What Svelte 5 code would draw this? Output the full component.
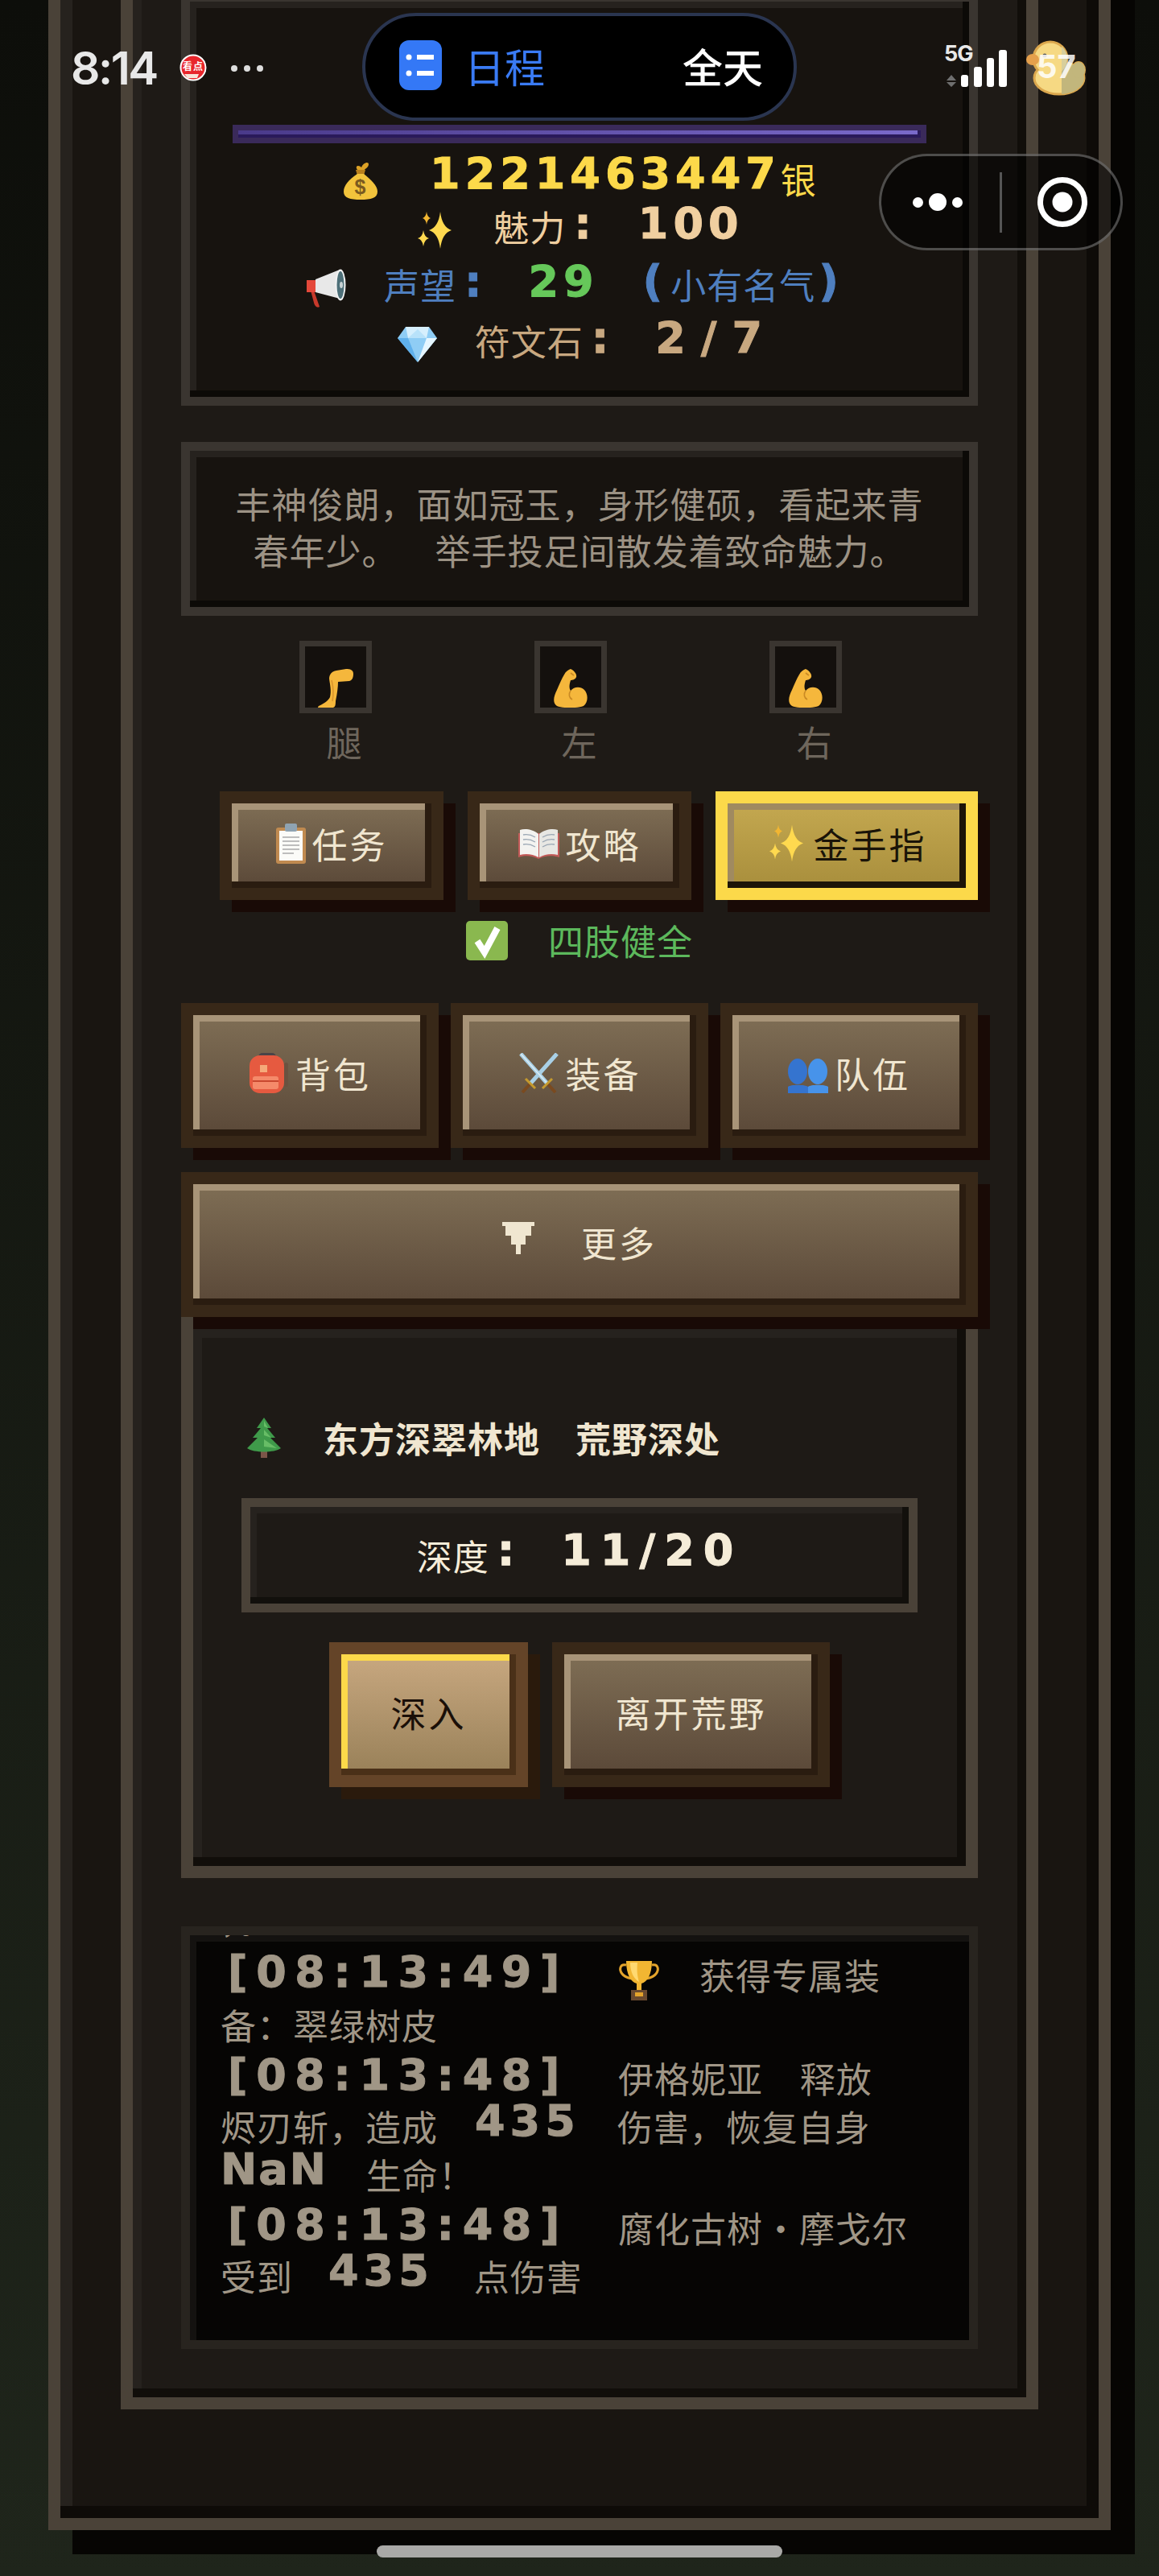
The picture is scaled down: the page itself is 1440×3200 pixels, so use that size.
<script>
  // 4-point sparkle shape
  function star(cx, cy, rx, ry) {
    const kx = rx * 0.16;
    const ky = ry * 0.16;
    return `M${cx} ${cy - ry}Q${cx + kx} ${cy - ky} ${cx + rx} ${cy}Q${cx + kx} ${cy + ky} ${cx} ${cy + ry}Q${cx - kx} ${cy + ky} ${cx - rx} ${cy}Q${cx - kx} ${cy - ky} ${cx} ${cy - ry}Z`;
  }

  const limbs = [
    { name: "腿", icon: "leg" },
    { name: "左", icon: "arm" },
    { name: "右", icon: "arm" },
  ];
</script>

{#snippet sparkles(w, h)}
  <svg class="ic" width={w} height={h} viewBox="0 0 50 46">
    <path d={star(31, 23, 14, 23)} fill="#ffd94f" />
    <path d={star(14, 8, 5, 8)} fill="#f2b632" />
    <path d={star(10, 33, 7, 10)} fill="#ffd94f" />
  </svg>
{/snippet}

{#snippet leg()}
  <svg class="ic" width="46" height="48" viewBox="0 0 46 48">
    <path d="M45 6C45 1 41 0 36 0L24 2C18 3 15 7 15 12C16 20 18 27 16 35C14 40 6 44 2 46C0 48 1 48 4 48L19 48C22 48 23 46 23 40C25 30 26 22 26 16L40 15C44 14 45 10 45 6Z" fill="#f5b73c" />
    <path d="M18 14C20 22 21 30 19 40" stroke="#d8922a" stroke-width="1.5" fill="none" />
  </svg>
{/snippet}

{#snippet arm()}
  <svg class="ic" width="44" height="48" viewBox="0 0 44 48">
    <path d="M22 0C26 2 30 6 29 10C28 13 24 14 22 14C20 20 20 24 22 27C26 22 34 21 39 26C44 31 44 42 38 46C30 49 12 49 5 46C-1 42 1 34 5 26C8 19 11 12 14 7C16 3 19 1 22 0Z" fill="#f5b73c" />
    <path d="M22 27C19 31 20 36 24 38M22 5L26 8" stroke="#c98a24" stroke-width="1.6" fill="none" />
  </svg>
{/snippet}

<div class="page">
  <div class="frame">
    <div class="frame-inner">
      <section class="panel stats">
        <div class="bar-track"><div class="bar-fill"></div></div>

        <div class="row gold">
          <svg class="ic bag" width="46" height="50" viewBox="0 0 46 50">
            <path d="M19 12C15 6 22 6 24 9C26 3 33 1 33 5C33 9 29 10 27 13Z" fill="#dca126" />
            <path d="M17 12H29L27 19H19Z" fill="#b9801c" />
            <path d="M19 17C8 24 2 32 2 39C2 47 10 49 23 49C36 49 44 47 44 39C44 32 36 24 27 17Z" fill="#f2c33c" />
            <text x="23" y="42" font-size="25" font-weight="700" text-anchor="middle" fill="#7a5a20" font-family="Liberation Sans">$</text>
          </svg>
          <span class="px money">1221463447</span><span class="cn">银</span>
        </div>

        <div class="row peach">
          {@render sparkles(50, 46)}
          <span class="cn lbl">魅力</span><span class="px colon">:</span><span class="px">100</span>
        </div>

        <div class="row blue r3">
          <svg class="ic" width="50" height="48" viewBox="0 0 50 48">
            <path d="M10 27L17 47C14 49 11 46 10 42L6 27Z" fill="#c7392b" />
            <path d="M1 14H14V29H1Z" fill="#e4483a" />
            <path d="M12 13L42 1L46 38L12 29Z" fill="#e8e8e8" />
            <ellipse cx="43" cy="20" rx="6.5" ry="19.5" fill="#f2f2f2" />
            <ellipse cx="43" cy="20" rx="4.5" ry="17" fill="#4d6f78" />
            <ellipse cx="44" cy="20" rx="2" ry="4" fill="#c8d2d4" />
          </svg>
          <span class="cn lbl">声望</span><span class="px colon">:</span><span class="px green">29</span>
          <span class="px paren">(</span><span class="cn lbl rep">小有名气</span><span class="px paren">)</span>
        </div>

        <div class="row tan r4">
          <svg class="ic" width="49" height="44" viewBox="0 0 49 44">
            <path d="M10 0H39L49 14L25 44L0 14Z" fill="#8fcdf5" />
            <path d="M10 0H39L36 14H13Z" fill="#d6effd" />
            <path d="M0 14H13L25 44Z" fill="#5fb0ec" />
            <path d="M49 14H36L25 44Z" fill="#e6f6ff" />
            <path d="M13 14L25 3L36 14Z" fill="#b8e2fa" />
          </svg>
          <span class="cn lbl">符文石</span><span class="px colon">:</span><span class="px wide">2/7</span>
        </div>
      </section>

      <section class="panel desc">
        丰神俊朗，面如冠玉，身形健硕，看起来青春年少。<span class="pause"></span>举手投足间散发着致命魅力。
      </section>

      <div class="limbs">
        {#each limbs as limb}
          <div class="limb">
            <div class="slot">
              {#if limb.icon === "leg"}
                {@render leg()}
              {:else}
                {@render arm()}
              {/if}
            </div>
            <span class="limb-name">{limb.name}</span>
          </div>
        {/each}
      </div>

      <div class="actions">
        <button class="btn task">
          <svg class="ic" width="37" height="50" viewBox="0 0 37 50">
            <rect y="5" width="37" height="45" rx="3" fill="#c08a50" />
            <rect x="4" y="9" width="29" height="37" fill="#fbfbf8" />
            <rect x="11" y="0" width="15" height="10" rx="2" fill="#8fa3b2" />
            <path d="M8 17H29M8 22H29M8 27H29M8 32H29M8 37H22" stroke="#a9a9a9" stroke-width="1.5" />
          </svg>
          <span>任务</span>
        </button>
        <button class="btn task">
          <svg class="ic" width="51" height="38" viewBox="0 0 51 38">
            <path d="M0 6V36C8 33 18 34 25 38C32 34 42 33 51 36V6Z" fill="#c25a58" />
            <path d="M25 7C18 1 8 0 2 2V33C10 31 18 32 25 36Z" fill="#f3f3f0" />
            <path d="M26 7C33 1 43 0 49 2V33C41 31 33 32 26 36Z" fill="#e7e7e3" />
            <path d="M6 8C11 7 16 8 21 11M6 14C11 13 16 14 21 17M6 20C11 19 16 20 21 23M30 11C35 8 40 7 45 8M30 17C35 14 40 13 45 14M30 23C35 20 40 19 45 20" stroke="#9aa7b4" stroke-width="1.4" fill="none" />
          </svg>
          <span>攻略</span>
        </button>
        <button class="btn task cheat">
          {@render sparkles(50, 47)}
          <span>金手指</span>
        </button>
      </div>

      <div class="health">
        <svg class="ic" width="52" height="49" viewBox="0 0 52 49">
          <rect width="52" height="49" rx="5" fill="#8ab84f" />
          <path d="M14 25L23 39L39 9" stroke="#fff" stroke-width="8" fill="none" />
        </svg>
        <span>四肢健全</span>
      </div>

      <div class="menu">
        <button class="btn big">
          <svg class="ic" width="50" height="50" viewBox="0 0 50 50">
            <rect x="12" y="0" width="22" height="12" rx="5" fill="#4a4448" />
            <rect x="1" y="3" width="43" height="47" rx="13" fill="#e65a40" />
            <rect x="44" y="12" width="5" height="30" rx="2.5" fill="#6a5240" />
            <rect x="14" y="15" width="9" height="9" fill="#f5aa7a" />
            <rect x="5" y="29" width="32" height="16" rx="3" fill="#f58a6a" />
            <path d="M5 35H37" stroke="#c8472f" stroke-width="2" />
          </svg>
          <span>背包</span>
        </button>
        <button class="btn big">
          <svg class="ic" width="51" height="50" viewBox="0 0 51 50">
            <path d="M3 1L36 38M48 1L15 38" stroke="#a9d0e6" stroke-width="5" />
            <path d="M3 1L36 38" stroke="#dcecf4" stroke-width="1.5" />
            <path d="M36 38L46 49M15 38L5 49" stroke="#7a4a20" stroke-width="4" />
            <path d="M30 44L42 32M21 44L9 32" stroke="#c59a2e" stroke-width="3" />
          </svg>
          <span>装备</span>
        </button>
        <button class="btn big">
          <svg class="ic team" width="50" height="43" viewBox="0 0 50 43">
            <ellipse cx="12" cy="16" rx="12" ry="16" fill="#3574cf" />
            <path d="M0 43V35C3 32 21 32 25 35V43Z" fill="#3574cf" />
            <ellipse cx="37" cy="16" rx="12" ry="16" fill="#4793ea" />
            <path d="M25 43V35C28 32 46 32 50 35V43Z" fill="#4793ea" />
          </svg>
          <span>队伍</span>
        </button>
      </div>

      <button class="btn more">
        <svg class="ic funnel" width="40" height="40" viewBox="0 0 40 40">
          <path d="M0 0H40V5H36V17H29V28H23V40H17V28H11V17H4V5H0Z" fill="#f0e6d0" />
        </svg>
        <span>更多</span>
      </button>

      <section class="wild">
        <div class="region">
          <svg class="ic" width="46" height="50" viewBox="0 0 46 50">
            <rect x="19" y="41" width="8" height="9" fill="#7b5548" />
            <path d="M23 0L32 13H27L37 25H31L44 38C36 44 10 44 2 38L15 25H9L19 13H14Z" fill="#3f9a4a" />
            <path d="M23 4L28 13L23 11ZM23 15L32 25L23 22ZM23 27L39 38L23 36Z" fill="#67bd66" />
          </svg>
          <span>东方深翠林地 荒野深处</span>
        </div>

        <div class="depth">
          <span class="cn">深度</span><span class="px colon">:</span><span class="px deep">11/20</span>
        </div>

        <div class="wild-actions">
          <button class="btn go">深入</button>
          <button class="btn leave">离开荒野</button>
        </div>
      </section>

      <section class="log">
        <div class="entry">，。</div>
        <div class="entry">
          <span class="px ts">[08:13:49]</span><svg class="ic cup" width="52" height="50" viewBox="0 0 52 50">
            <path d="M10 6C2 4 1 12 5 17C8 21 13 22 17 23M42 6C50 4 51 12 47 17C44 21 39 22 35 23" stroke="#e3a32b" stroke-width="3" fill="none" />
            <path d="M10 1H42C42 18 36 27 29 29V37H23V29C16 27 10 18 10 1Z" fill="#f2b632" />
            <path d="M15 3H24C23 14 24 20 26 27C19 23 15 14 15 3Z" fill="#ffd970" />
            <rect x="16" y="37" width="20" height="13" fill="#6a4a30" />
            <rect x="21" y="40" width="10" height="5" fill="#e3a32b" />
          </svg><span class="after-cup">获得专属装</span><br />备：翠绿树皮
        </div>
        <div class="entry">
          <span class="px ts">[08:13:48]</span><span class="spaced">伊格妮亚 释放</span><br />烬刃斩，造成<span class="px dmg">435</span>伤害，恢复自身<br /><span class="px nan">NaN</span>生命！
        </div>
        <div class="entry">
          <span class="px ts">[08:13:48]</span>腐化古树·摩戈尔<br />受到<span class="px dmg2">435</span>点伤害
        </div>
      </section>
    </div>
  </div>

  <!-- phone status bar sits on top of the page -->
  <div class="statusbar">
    <span class="time">8:14</span>
    <svg class="ic badge" width="34" height="34" viewBox="0 0 34 34">
      <circle cx="17" cy="17" r="15.5" fill="#e8262c" stroke="#fff" stroke-width="2" />
      <text x="17" y="20" font-size="12" font-weight="700" text-anchor="middle" fill="#fff" font-family="Noto Sans CJK SC">看点</text>
      <path d="M6 25H24L22 30H10Z" fill="#f6e4d8" />
    </svg>
    <span class="more-dots"><i></i><i></i><i></i></span>

    <div class="pill">
      <svg class="ic" width="53" height="62" viewBox="0 0 53 62">
        <rect width="53" height="62" rx="12" fill="#3478f6" />
        <path d="M22 21H43M22 41H43" stroke="#fff" stroke-width="6" />
        <circle cx="12" cy="21" r="3.5" fill="#fff" />
        <circle cx="12" cy="41" r="3.5" fill="#fff" />
      </svg>
      <span class="pill-title">日程</span>
      <span class="pill-all">全天</span>
    </div>

    <div class="signal">
      <span class="fiveg">5G</span>
      <svg class="ic" width="78" height="46" viewBox="0 0 78 46">
        <path d="M3 38L9 31L15 38ZM3 40L9 46L15 40Z" fill="#6f6f6f" />
        <rect x="21" y="31" width="9" height="15" rx="3" fill="#fff" />
        <rect x="37" y="21" width="10" height="25" rx="3" fill="#fff" />
        <rect x="53" y="10" width="9" height="36" rx="3" fill="#fff" />
        <rect x="68" y="0" width="10" height="46" rx="3" fill="#fff" />
      </svg>
    </div>

    <div class="duck">
      <svg class="ic" width="75" height="70" viewBox="0 0 75 70">
        <defs>
          <clipPath id="spent"><rect x="45" y="0" width="30" height="70" /></clipPath>
        </defs>
        <g>
          <ellipse cx="42" cy="48" rx="31" ry="20" fill="#f6d983" stroke="#dca84e" stroke-width="3" />
          <ellipse cx="66" cy="38" rx="8" ry="10" fill="#f6d983" stroke="#dca84e" stroke-width="2" />
          <circle cx="31" cy="24" r="21" fill="#f6d983" stroke="#dca84e" stroke-width="3" />
          <ellipse cx="40" cy="46" rx="27" ry="16" fill="#f6d983" />
        </g>
        <g clip-path="url(#spent)">
          <ellipse cx="42" cy="48" rx="31" ry="20" fill="#c2b67c" />
          <ellipse cx="66" cy="38" rx="8" ry="10" fill="#c2b67c" />
          <circle cx="31" cy="24" r="21" fill="#d8cf9c" />
        </g>
        <ellipse cx="9" cy="25" rx="8" ry="7" fill="#e5a04c" />
        <circle cx="24" cy="20" r="2.5" fill="#5a5a5a" />
      </svg>
      <span class="duck-num">57</span>
    </div>
  </div>

  <div class="capsule">
    <span class="cap-dots"><i></i><i class="mid"></i><i></i></span>
    <span class="cap-line"></span>
    <svg class="ic" width="62" height="62" viewBox="0 0 62 62">
      <circle cx="31" cy="31" r="27.5" fill="none" stroke="#fff" stroke-width="7" />
      <circle cx="31" cy="31" r="12.5" fill="#fff" />
    </svg>
  </div>

  <div class="homebar"></div>
</div>

<style>
  :global(body) {
    margin: 0;
    background: #0d0e0a;
  }

  .page {
    position: relative;
    width: 1440px;
    height: 3200px;
    overflow: hidden;
    padding-left: 60px;
    box-sizing: border-box;
    background: linear-gradient(180deg, #0d0e0a 0%, #1f251b 100%);
    font-family: "Noto Sans CJK SC", "Liberation Sans", sans-serif;
    font-size: 44px;
    letter-spacing: 1px;
  }

  .frame {
    width: 1320px;
    box-sizing: border-box;
    margin-top: -60px;
    padding: 0 75px 135px;
    border: 15px solid #4a4238;
    background: #191511;
    box-shadow:
      30px 30px 0 #060503,
      inset -15px -15px 0 #0e0b08,
      inset 15px 15px 0 #26221e;
  }

  .frame-inner {
    box-sizing: border-box;
    padding: 21px 60px 60px;
    border: 15px solid #4a4238;
    background: #1e1a16;
    box-shadow:
      inset -11px -11px 0 #110e0a,
      inset 11px 11px 0 #26221e;
  }

  .ic {
    flex: none;
    vertical-align: middle;
  }

  /* pixel font stand-in for latin and digits */
  .px {
    font-family: "DejaVu Sans", sans-serif;
    font-weight: 700;
    font-size: 54px;
    letter-spacing: 6px;
    line-height: 0;
    vertical-align: 7px;
    -webkit-text-stroke: 1px currentColor;
  }

  .panel {
    box-sizing: border-box;
    border: 11px solid #3a3530;
    background: #17130f;
    box-shadow:
      inset -8px -8px 0 #0c0a07,
      inset 8px 8px 0 #26221e;
  }

  .stats {
    height: 513px;
    padding-top: 153px;
  }

  .bar-track {
    width: 862px;
    height: 23px;
    box-sizing: border-box;
    margin: 0 0 13px 53px;
    border: 7px solid #3a2a5a;
    background: #2a1a5a;
  }

  .bar-fill {
    height: 100%;
    background: linear-gradient(90deg, #4a3a8a, #7a6aca);
    box-shadow: inset -4px -4px 0 #2a1a5a;
  }

  .row {
    height: 62px;
    line-height: 62px;
    text-align: center;
    white-space: nowrap;
  }

  .row .ic {
    margin-bottom: 10px;
  }

  .gold {
    color: #fcd94a;
  }
  .peach {
    color: #f0cfa0;
  }
  .blue {
    color: #4f7fbf;
  }
  .tan {
    color: #c8a880;
  }
  .px.green {
    color: #66c85a;
  }

  .r3 {
    margin-top: 10px;
    padding-right: 18px;
  }
  .r4 {
    margin-top: 8px;
    padding-left: 20px;
  }

  .money {
    margin-left: 52px;
  }

  .lbl {
    margin-left: 36px;
    line-height: 0;
    vertical-align: 3px;
  }

  .colon {
    margin-left: 10px;
    margin-right: 52px;
  }

  .paren {
    margin-left: 44px;
    letter-spacing: 0;
  }

  .lbl.rep {
    margin-left: 10px;
  }
  .rep + .paren {
    margin-left: 4px;
  }

  .wide {
    letter-spacing: 19px;
  }

  .desc {
    height: 216px;
    margin-top: 45px;
    padding: 36px 48px;
    line-height: 58px;
    text-align: center;
    color: #9c9284;
  }

  .pause {
    display: inline-block;
    width: 46px;
  }

  .limbs {
    display: grid;
    grid-template-columns: repeat(3, 292px);
    justify-content: center;
    margin-top: 31px;
  }

  .limb {
    display: flex;
    flex-direction: column;
    align-items: center;
  }

  .slot {
    width: 90px;
    height: 90px;
    box-sizing: border-box;
    margin-right: 22px;
    border: 7px solid #3a3530;
    background: #14100d;
    display: flex;
    align-items: flex-end;
    justify-content: center;
  }

  .limb-name {
    margin-top: 6px;
    line-height: 58px;
    color: #6e665c;
  }

  .btn {
    display: flex;
    align-items: center;
    justify-content: center;
    box-sizing: border-box;
    padding: 0 0 6px;
    font: inherit;
    letter-spacing: 3px;
    color: #f0e6d0;
    border: 15px solid #382818;
    background: linear-gradient(180deg, #7f6e55, #5a4838);
    box-shadow:
      15px 15px 0 #190a06,
      inset -8px -8px 0 #2a1c10,
      inset 8px 8px 0 #a89478;
  }

  .actions {
    display: flex;
    justify-content: flex-end;
    gap: 30px;
    margin-top: 33px;
  }

  .task {
    width: 278px;
    height: 135px;
    gap: 8px;
  }

  .cheat {
    width: 326px;
    color: #1a1408;
    border-color: #fcd94a;
    background: linear-gradient(180deg, #c4a850, #a88e3c);
    box-shadow:
      15px 15px 0 #190a06,
      inset -8px -8px 0 #1c1408,
      inset 8px 8px 0 #a08a60;
  }

  .health {
    display: flex;
    align-items: center;
    justify-content: center;
    gap: 50px;
    margin-top: 21px;
    line-height: 58px;
    color: #5cb85c;
  }

  .menu {
    display: grid;
    grid-template-columns: repeat(3, 1fr);
    gap: 15px;
    margin-top: 49px;
  }

  .big {
    height: 180px;
    gap: 8px;
  }

  .team {
    margin-top: 6px;
  }

  .more {
    position: relative;
    z-index: 1;
    width: 100%;
    height: 180px;
    margin-top: 30px;
    gap: 58px;
  }

  .funnel {
    margin-bottom: 10px;
  }

  .wild {
    box-sizing: border-box;
    padding: 106px 60px 98px;
    border: 15px solid #4a4238;
    background: #1e1a16;
    box-shadow:
      inset -11px -11px 0 #110e0a,
      inset 11px 11px 0 #26221e;
  }

  .region {
    display: flex;
    align-items: center;
    gap: 50px;
    height: 58px;
    padding-left: 5px;
    font-weight: 700;
    color: #f0e6d0;
  }

  .region span {
    word-spacing: 33px;
  }

  .depth {
    box-sizing: border-box;
    height: 142px;
    margin-top: 46px;
    border: 11px solid #4a4238;
    box-shadow:
      inset -8px -8px 0 #12100c,
      inset 8px 8px 0 #26221e;
    line-height: 120px;
    text-align: center;
    color: #f5ecd8;
  }

  .deep {
    letter-spacing: 11px;
  }

  .wild-actions {
    display: flex;
    justify-content: center;
    gap: 30px;
    margin-top: 37px;
  }

  .go,
  .leave {
    height: 180px;
  }

  .go {
    width: 247px;
    color: #1a0f08;
    border-color: #644428;
    background: linear-gradient(180deg, #c8a880, #988058);
    box-shadow:
      15px 15px 0 #2a1a0c,
      inset -8px -8px 0 #4a3018,
      inset 8px 8px 0 #fcd94a;
  }

  .leave {
    width: 345px;
  }

  .log {
    box-sizing: border-box;
    height: 525px;
    margin-top: 60px;
    padding: 0 0 0 38px;
    overflow: hidden;
    border: 11px solid #28241f;
    background: #060504;
    box-shadow: inset 8px 8px 0 #141210;
    line-height: 60px;
    color: #a09686;
  }

  .entry {
    margin-bottom: 6px;
    white-space: nowrap;
  }

  .entry:first-child {
    margin-top: -51px;
    margin-bottom: 10px;
  }

  .ts {
    display: inline-block;
    width: 494px;
    padding-left: 9px;
    box-sizing: border-box;
    letter-spacing: 10.5px;
    vertical-align: 4px;
  }

  .after-cup {
    margin-left: 49px;
  }

  .spaced {
    word-spacing: 35px;
  }

  .dmg {
    margin: 0 46px;
  }

  .dmg2 {
    margin: 0 50px 0 44px;
  }

  .nan {
    margin-right: 48px;
    letter-spacing: 2px;
  }

  .statusbar {
    position: absolute;
    top: 0;
    left: 0;
    width: 100%;
    height: 166px;
    box-sizing: border-box;
    padding-left: 88px;
    display: flex;
    align-items: center;
  }

  .time {
    width: 106px;
    font-family: Inter, sans-serif;
    font-weight: 600;
    font-size: 57px;
    letter-spacing: -2.5px;
    color: #e8e8e8;
    margin-top: 3px;
  }

  .badge {
    margin-left: 29px;
    margin-top: 2px;
  }

  .more-dots {
    display: flex;
    gap: 8px;
    margin-left: 30px;
    margin-top: 3px;
  }

  .more-dots i {
    width: 8px;
    height: 8px;
    border-radius: 50%;
    background: #ddd;
  }

  .pill {
    width: 540px;
    height: 134px;
    box-sizing: border-box;
    margin-left: 123px;
    padding: 0 38px 4px 42px;
    display: flex;
    align-items: center;
    border: 4px solid #2a3550;
    border-radius: 67px;
    background: #000;
    font-size: 50px;
    letter-spacing: 0;
  }

  .pill-title {
    margin-left: 28px;
    color: #3a7bf5;
  }

  .pill-all {
    margin-left: auto;
    font-weight: 500;
    color: #fff;
  }

  .signal {
    position: relative;
    width: 78px;
    height: 52px;
    margin-left: 183px;
    margin-top: -2px;
    display: flex;
    align-items: flex-end;
  }

  .fiveg {
    position: absolute;
    left: 0;
    top: -4px;
    font-family: Inter, sans-serif;
    font-weight: 700;
    font-size: 27px;
    line-height: 30px;
    letter-spacing: -1px;
    color: #e8e8e8;
  }

  .duck {
    position: relative;
    margin-left: 23px;
    margin-top: 2px;
    display: flex;
  }

  .duck-num {
    position: absolute;
    left: 14px;
    top: 10px;
    font-family: Inter, sans-serif;
    font-weight: 700;
    font-size: 40px;
    line-height: 48px;
    letter-spacing: 0;
    color: rgba(255, 255, 255, 0.85);
  }

  .capsule {
    position: absolute;
    top: 191px;
    left: 1092px;
    width: 303px;
    height: 120px;
    box-sizing: border-box;
    display: flex;
    align-items: center;
    padding-left: 39px;
    border: 3px solid rgba(255, 255, 255, 0.28);
    border-radius: 60px;
    background: rgba(0, 0, 0, 0.55);
  }

  .cap-dots {
    display: flex;
    align-items: center;
    gap: 7px;
  }

  .cap-dots i {
    width: 13px;
    height: 13px;
    border-radius: 50%;
    background: #fff;
  }

  .cap-dots i.mid {
    width: 22px;
    height: 22px;
  }

  .cap-line {
    width: 3px;
    height: 75px;
    margin: 0 44px 0 46px;
    background: #555;
  }

  .homebar {
    position: absolute;
    left: 468px;
    top: 3162px;
    width: 504px;
    height: 15px;
    border-radius: 8px;
    background: #a9a9a7;
  }
</style>
